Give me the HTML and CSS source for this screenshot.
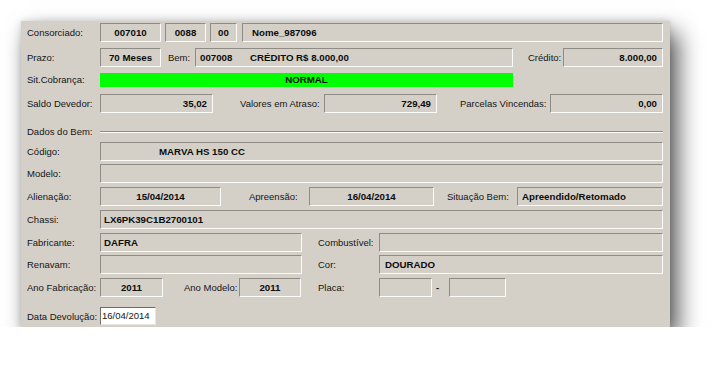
FILE: index.html
```html
<!DOCTYPE html>
<html lang="pt-BR">
<head>
<meta charset="utf-8">
<title>Consorciado</title>
<link rel="stylesheet" href="styles.css">
</head>
<body>
<div class="panel">
  <div class="row p25">
    <span class="lbl lead">Consorciado:</span>
    <span class="fld w61 c b">007010</span>
    <span class="fld w41 c b ml4">0088</span>
    <span class="fld w27 c b ml4">00</span>
    <span class="fld grow b ml5 pl9">Nome_987096</span>
  </div>
  <div class="row p25">
    <span class="lbl lead">Prazo:</span>
    <span class="fld w61 c b">70 Meses</span>
    <span class="lbl lbl-bem">Bem:</span>
    <span class="fld w318 b pl4"><span class="code">007008</span><span>CRÉDITO R$ 8.000,00</span></span>
    <span class="lbl lbl-cred">Crédito:</span>
    <span class="fld grow r b">8.000,00</span>
  </div>
  <div class="row p21">
    <span class="lbl lead short">Sit.Cobrança:</span>
    <span class="status b">NORMAL</span>
  </div>
  <div class="row p28">
    <span class="lbl lead">Saldo Devedor:</span>
    <span class="fld w113 r b">35,02</span>
    <span class="lbl lbl-atraso">Valores em Atraso:</span>
    <span class="fld w113 r b">729,49</span>
    <span class="lbl lbl-parc">Parcelas Vincendas:</span>
    <span class="fld grow r b">0,00</span>
  </div>
  <div class="row p20 section">
    <span class="lbl lead">Dados do Bem:</span>
    <span class="rule"></span>
  </div>
  <div class="row p22">
    <span class="lbl lead">Código:</span>
    <span class="fld grow b pl58">MARVA HS 150 CC</span>
  </div>
  <div class="row p23">
    <span class="lbl lead">Modelo:</span>
    <span class="fld grow"></span>
  </div>
  <div class="row p23">
    <span class="lbl lead">Alienação:</span>
    <span class="fld w121 c b">15/04/2014</span>
    <span class="lbl lbl-apre">Apreensão:</span>
    <span class="fld w125 c b">16/04/2014</span>
    <span class="lbl lbl-sit">Situação Bem:</span>
    <span class="fld grow b pl4">Apreendido/Retomado</span>
  </div>
  <div class="row p23">
    <span class="lbl lead">Chassi:</span>
    <span class="fld grow b pl3">LX6PK39C1B2700101</span>
  </div>
  <div class="row p22">
    <span class="lbl lead">Fabricante:</span>
    <span class="fld w202 b pl3">DAFRA</span>
    <span class="lbl lbl-right">Combustível:</span>
    <span class="fld grow"></span>
  </div>
  <div class="row p23">
    <span class="lbl lead">Renavam:</span>
    <span class="fld w202"></span>
    <span class="lbl lbl-right">Cor:</span>
    <span class="fld grow b pl5">DOURADO</span>
  </div>
  <div class="row p29">
    <span class="lbl lead">Ano Fabricação:</span>
    <span class="fld w63 c b">2011</span>
    <span class="lbl lbl-anomod">Ano Modelo:</span>
    <span class="fld w62 c b">2011</span>
    <span class="lbl lbl-placa">Placa:</span>
    <span class="fld w53"></span>
    <span class="lbl dash">-</span>
    <span class="fld w57"></span>
  </div>
  <div class="row p20">
    <span class="lbl lead">Data Devolução:</span>
    <span class="input">16/04/2014</span>
  </div>
</div>
</body>
</html>
```

FILE: styles.css
```css
* { box-sizing: border-box; }

html, body {
  margin: 0;
  padding: 0;
  background: #ffffff;
}

body {
  font-family: "Liberation Sans", Arial, sans-serif;
  font-size: 9.5px;
  color: #151515;
  padding: 21px 0 0 21px;
}

.panel {
  width: 649px;
  height: 306px;
  background: #d4d0c8;
  box-shadow: 8px 12px 22px rgba(0, 0, 0, 0.66), 0 0 7px rgba(0, 0, 0, 0.14);
  padding: 2px 7px 0 6px;
  display: flex;
  flex-direction: column;
}

.row {
  display: flex;
  align-items: flex-start;
}

.p20 { height: 20px; }
.p21 { height: 21px; }
.p22 { height: 22px; }
.p23 { height: 23px; }
.p25 { height: 25px; }
.p28 { height: 28px; }
.p29 { height: 29px; }

.lbl {
  height: 19px;
  line-height: 19px;
  white-space: nowrap;
  flex: none;
}

.lead { width: 73px; }
.lead.short { height: 14px; line-height: 14px; }

.lbl-bem { width: 34px; padding-left: 7px; }
.lbl-cred { width: 50px; padding-left: 15px; }
.lbl-atraso { width: 111px; padding-left: 27px; }
.lbl-parc { width: 113px; padding-left: 23px; }
.lbl-apre { width: 88px; padding-left: 28px; }
.lbl-sit { width: 83px; padding-left: 13px; }
.lbl-right { width: 77px; padding-left: 16px; }
.lbl-anomod { width: 76px; padding-left: 21px; }
.lbl-placa { width: 78px; padding-left: 17px; }
.dash { width: 17px; padding-left: 4px; font-weight: bold; line-height: 20px; }

.fld {
  flex: none;
  height: 19px;
  line-height: 17px;
  border-top: 1px solid #8f8c86;
  border-left: 1px solid #8f8c86;
  border-right: 1px solid #fbfbf9;
  border-bottom: 1px solid #fbfbf9;
  background: #d4d0c8;
  white-space: nowrap;
  overflow: hidden;
}

.grow { flex: 1 1 auto; }

.w27 { width: 27px; }
.w41 { width: 41px; }
.w53 { width: 53px; }
.w57 { width: 57px; }
.w61 { width: 61px; }
.w62 { width: 62px; }
.w63 { width: 63px; }
.w113 { width: 113px; }
.w121 { width: 121px; }
.w125 { width: 125px; }
.w202 { width: 202px; }
.w318 { width: 318px; }

.ml4 { margin-left: 4px; }
.ml5 { margin-left: 5px; }
.pl3 { padding-left: 3px; }
.pl4 { padding-left: 4px; }
.pl5 { padding-left: 5px; }
.pl9 { padding-left: 9px; }
.pl58 { padding-left: 58px; }

.c { text-align: center; }
.r { text-align: right; padding-right: 5px; }
.b { font-weight: bold; color: #0c0c0c; font-size: 9.7px; }

.code { display: inline-block; width: 50px; }

.status {
  width: 413px;
  height: 14px;
  line-height: 14px;
  background: #00ff00;
  text-align: center;
  flex: none;
}

.section { align-items: center; }
.section .lbl { line-height: 20px; height: 20px; }

.rule {
  flex: 1 1 auto;
  height: 2px;
  border-top: 1px solid #8f8c86;
  border-bottom: 1px solid #fbfbf9;
}

.input {
  width: 56px;
  height: 18px;
  line-height: 16px;
  background: #ffffff;
  border-top: 1px solid #6e6c68;
  border-left: 1px solid #6e6c68;
  border-right: 1px solid #e8e6e2;
  border-bottom: 1px solid #e8e6e2;
  padding-left: 1px;
  white-space: nowrap;
  overflow: hidden;
  flex: none;
}
```
